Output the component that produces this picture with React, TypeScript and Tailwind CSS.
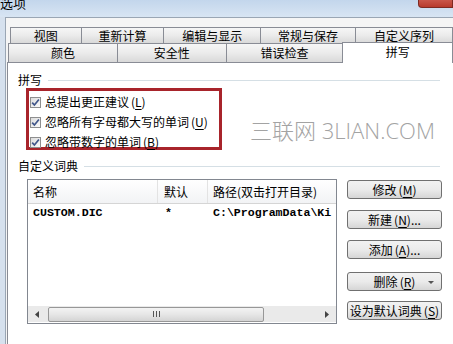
import React from "react";

type TabProps = { label: string; w: string; active?: boolean };

const Tab = ({ label, w, active }: TabProps) => {
  if (active) {
    return (
      <div
        className={`${w} -ml-px h-[21px] -mb-px z-10 flex items-start justify-center pt-[1px] bg-white border border-b-0 border-[#898c95] leading-[16px]`}
      >
        {label}
      </div>
    );
  }
  return (
    <div
      className={`${w} -ml-px first:ml-0 h-full flex items-center justify-center bg-linear-to-b from-[#f6f6f6] via-[#ebebeb] to-[#d9d9d9] border border-b-0 border-[#898c95] leading-none`}
    >
      {label}
    </div>
  );
};

const Check = () => (
  <div className="w-[11px] h-[11px] border border-[#8e8f8f] bg-linear-to-br from-[#dcdcdc] to-[#fbfbfb] flex items-center justify-center">
    <svg width="9" height="9" viewBox="0 0 9 9">
      <path d="M1.2 4.6 L3.4 7 L7.9 1.5" fill="none" stroke="#40568a" strokeWidth="1.7" />
    </svg>
  </div>
);

const Key = ({ k }: { k: string }) => (
  <span className="ml-[2px]">
    (<span className="underline underline-offset-2">{k}</span>)
  </span>
);

const Button = ({ children, className = "" }: { children: React.ReactNode; className?: string }) => (
  <div
    className={`h-[19px] w-[95px] rounded-[3px] border border-[#707070] bg-linear-to-b from-[#f2f2f2] via-[#ebebeb] to-[#d6d6d6] flex items-center justify-center leading-none relative ${className}`}
  >
    {children}
  </div>
);

export default function App() {
  return (
    <div className="w-[453px] h-[344px] overflow-hidden relative flex flex-col bg-[#d6e1ee] text-[12px] text-black font-['Noto_Sans_CJK_SC','Noto_Sans',sans-serif]">
      {/* title bar */}
      <div className="h-[17px] shrink-0 relative bg-linear-to-b from-[#c3d6ec] to-[#d8e5f3]">
        <span className="block -mt-[5px] text-[13px] leading-[16px]">选项</span>
        <div className="absolute right-0 top-0 w-[35px] h-[8px] rounded-bl-[4px] border border-t-0 border-[#7e2a22] bg-linear-to-b from-[#c9564a] to-[#b83a2c]" />
      </div>

      {/* client area */}
      <div className="flex-1 ml-[5px] flex flex-col bg-[#f5f5f5] border-l border-t border-[#9aa6b4]">
        <div className="pt-[9px] flex flex-col">
          <div className="h-[16px] ml-[4px] flex">
            <Tab label="视图" w="w-[73px]" />
            <Tab label="重新计算" w="w-[85px]" />
            <Tab label="编辑与显示" w="w-[100px]" />
            <Tab label="常规与保存" w="w-[97px]" />
            <Tab label="自定义序列" w="w-[100px]" />
          </div>
          <div className="h-[19px] ml-[2px] flex items-end">
            <Tab label="颜色" w="w-[111px]" />
            <Tab label="安全性" w="w-[111px]" />
            <Tab label="错误检查" w="w-[119px]" />
            <Tab label="拼写" w="w-[112px]" active />
          </div>
        </div>

        {/* tab page */}
        <div className="flex-1 ml-[1px] bg-white border-l border-t border-[#898c95] flex flex-col">
          <div className="mt-[10px] ml-[10px] flex items-center h-[14px]">
            <span className="leading-none">拼写</span>
            <div className="flex-1 h-px bg-[#d5dfe5] ml-[6px] mr-[13px]" />
          </div>

          <div className="mt-[1px] ml-[18px] w-[196px] h-[62px] border-[3px] border-[#a8242b] flex flex-col pt-[1px]">
            {[
              ["总提出更正建议", "L"],
              ["忽略所有字母都大写的单词", "U"],
              ["忽略带数字的单词", "B"],
            ].map(([t, k]) => (
              <div key={k} className="h-[20px] shrink-0 flex items-center pl-[1px] gap-[4px] leading-none">
                <Check />
                <span>
                  {t}
                  <Key k={k} />
                </span>
              </div>
            ))}
          </div>

          <div className="mt-[9px] ml-[10px] flex items-center h-[14px]">
            <span className="leading-none">自定义词典</span>
            <div className="flex-1 h-px bg-[#d5dfe5] ml-[6px] mr-[13px]" />
          </div>

          <div className="mt-[6px] ml-[19px] flex items-start">
            {/* list */}
            <div className="w-[310px] h-[145px] border border-[#828790] flex flex-col">
              <div className="h-[24px] shrink-0 flex bg-linear-to-b from-[#ffffff] to-[#f2f3f5] border-b border-[#d5d5d5] leading-none">
                <div className="w-[130px] pl-[5px] flex items-center border-r border-[#e3e3e3]">名称</div>
                <div className="w-[50px] pl-[6px] flex items-center border-r border-[#e3e3e3]">默认</div>
                <div className="flex-1 pl-[5px] flex items-center whitespace-nowrap overflow-hidden">路径(双击打开目录)</div>
              </div>
              <div className="h-[18px] shrink-0 flex items-center font-['Liberation_Mono',monospace] font-bold text-[11.6px] leading-none whitespace-nowrap">
                <div className="w-[130px] pl-[5px]">CUSTOM.DIC</div>
                <div className="w-[50px] pl-[7px]">*</div>
                <div className="flex-1 pl-[5px] overflow-hidden">C:\ProgramData\Ki</div>
              </div>
              <div className="flex-1" />
              <div className="h-[16px] mb-[1px] shrink-0 flex items-center bg-[#eaeaea]">
                <div className="w-[18px] h-full flex items-center justify-center">
                  <svg width="4" height="7" viewBox="0 0 4 7">
                    <path d="M4 0 L0 3.5 L4 7 Z" fill="#444" />
                  </svg>
                </div>
                <div className="ml-[2px] w-[216px] h-[15px] rounded-[2px] border border-[#979797] bg-linear-to-b from-[#f3f3f3] via-[#e6e6e6] to-[#d4d4d4] flex items-center justify-center gap-[2px]">
                  <div className="w-px h-[6px] bg-[#555]" />
                  <div className="w-px h-[6px] bg-[#555]" />
                  <div className="w-px h-[6px] bg-[#555]" />
                </div>
                <div className="flex-1" />
                <div className="w-[18px] h-full flex items-center justify-center">
                  <svg width="4" height="7" viewBox="0 0 4 7">
                    <path d="M0 0 L4 3.5 L0 7 Z" fill="#444" />
                  </svg>
                </div>
              </div>
            </div>

            {/* buttons */}
            <div className="ml-[10px] pt-[1px] flex flex-col">
              <Button>
                修改<Key k="M" />
              </Button>
              <Button className="mt-[11px]">
                新建<Key k="N" />...
              </Button>
              <Button className="mt-[11px]">
                添加<Key k="A" />...
              </Button>
              <Button className="mt-[13px]">
                删除<Key k="R" />
                <svg className="absolute right-[7px] top-[8px]" width="6" height="3" viewBox="0 0 6 3">
                  <path d="M0 0 L6 0 L3 3 Z" fill="#555" />
                </svg>
              </Button>
              <Button className="mt-[10px]">
                设为默认词典<Key k="S" />
              </Button>
            </div>
          </div>
        </div>
      </div>

      {/* watermark */}
      <div className="absolute left-[250px] top-[117px] text-[22px] font-light text-[#a3a3a3] leading-[26px] whitespace-nowrap font-['Open_Sans','Noto_Sans_CJK_SC',sans-serif] pointer-events-none">
        三联网 3LIAN.COM
      </div>
    </div>
  );
}
